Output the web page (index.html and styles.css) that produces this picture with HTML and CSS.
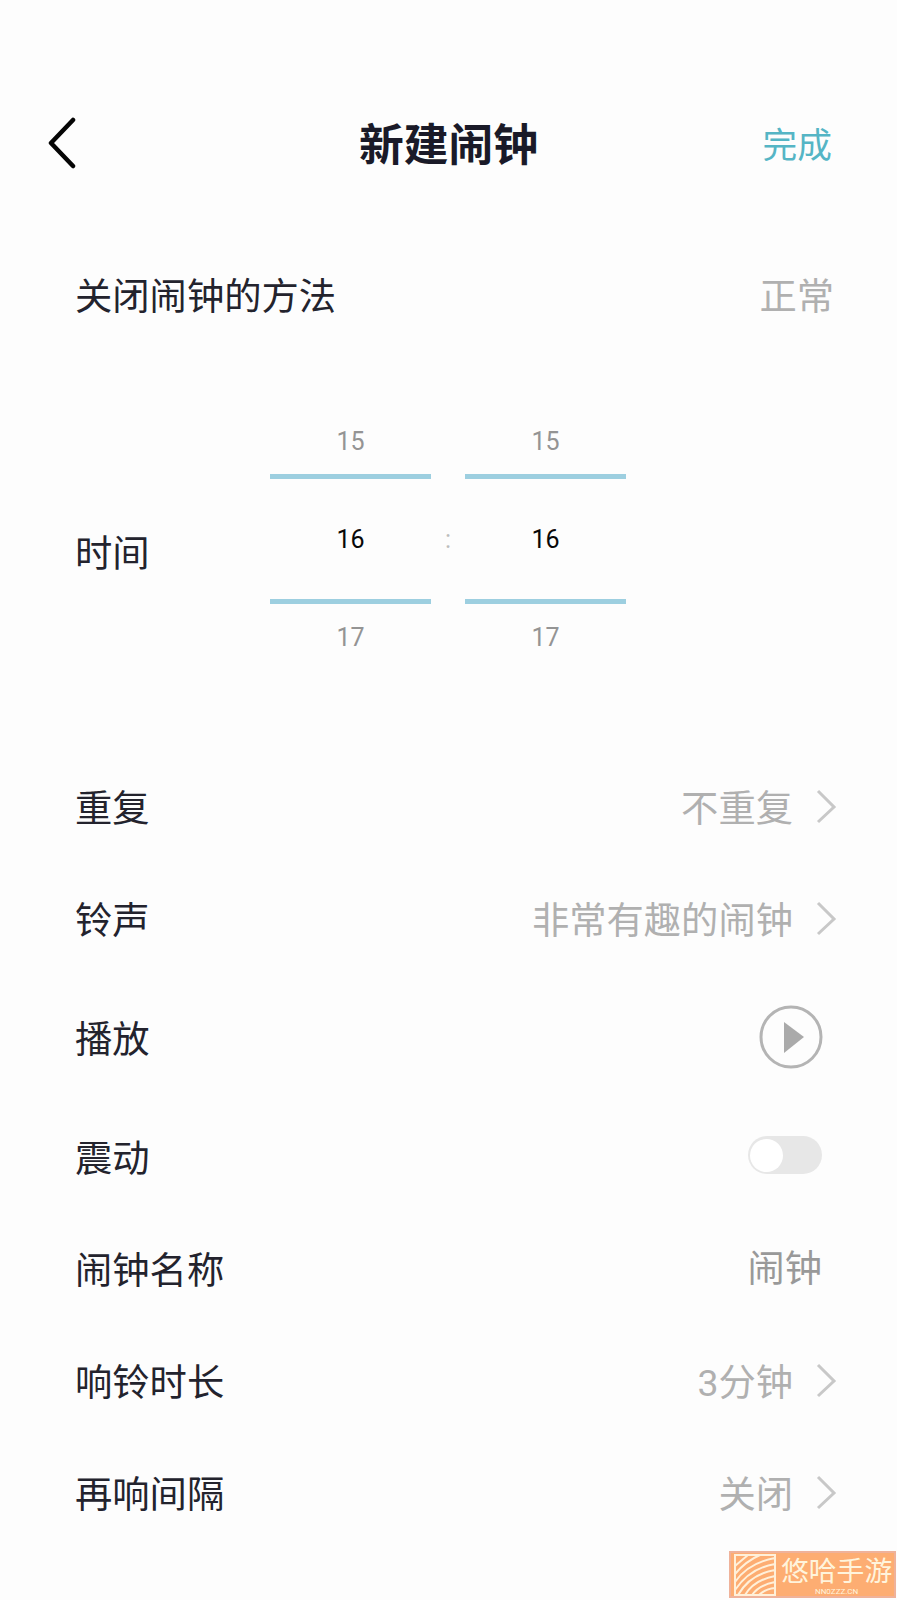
FILE: index.html
```html
<!DOCTYPE html>
<html lang="zh-CN">
<head>
<meta charset="utf-8">
<title>新建闹钟</title>
<link rel="stylesheet" href="styles.css">
</head>
<body>
<main class="screen">
  <header class="header">
    <svg class="back" viewBox="0 0 32 56"><path d="M25 7 3 30 25 53"/></svg>
    <h1 class="title">新建闹钟</h1>
    <span class="done">完成</span>
  </header>
  <section class="row method"><span>关闭闹钟的方法</span><span class="value flush">正常</span></section>
  <section class="row time">
    <span class="label">时间</span>
    <div class="picker">
      <div class="wheel"><span class="prev">15</span><span class="current">16</span><span class="next">17</span></div>
      <span class="colon">:</span>
      <div class="wheel"><span class="prev">15</span><span class="current">16</span><span class="next">17</span></div>
    </div>
  </section>
  <section class="row repeat"><span>重复</span><span class="value">不重复<svg class="chevron" viewBox="0 0 22 36"><path d="M2 3 18 19 2 34"/></svg></span></section>
  <section class="row sound"><span>铃声</span><span class="value">非常有趣的闹钟<svg class="chevron" viewBox="0 0 22 36"><path d="M2 3 18 19 2 34"/></svg></span></section>
  <section class="row play"><span>播放</span><svg class="play-button" viewBox="0 0 64 68"><circle cx="33" cy="36" r="30"/><path d="M26 21 46 36 26 52Z"/></svg></section>
  <section class="row vibrate"><span>震动</span><span class="toggle"><span class="knob"></span></span></section>
  <section class="row name"><span>闹钟名称</span><span class="value input">闹钟</span></section>
  <section class="row duration"><span>响铃时长</span><span class="value">3分钟<svg class="chevron" viewBox="0 0 22 36"><path d="M2 3 18 19 2 34"/></svg></span></section>
  <section class="row snooze"><span>再响间隔</span><span class="value">关闭<svg class="chevron" viewBox="0 0 22 36"><path d="M2 3 18 19 2 34"/></svg></span></section>
  <aside class="watermark">
    <svg class="mark" viewBox="0 0 42 42"><path d="M1 1H41V41H1ZM1 12Q8 6 14 1M1 20Q12 7 26 1M1 28Q14 9 41 4M1 36Q16 14 41 10M4 41Q16 20 41 16M11 41Q20 26 41 22M18 41Q25 31 41 28M25 41Q31 35 41 34"/></svg>
    <div class="brand"><span class="brand-name">悠哈手游</span><span class="brand-url">NN0ZZZ.CN</span></div>
  </aside>
</main>
</body>
</html>
```
FILE: styles.css
```css
* { box-sizing: border-box; }
body { margin: 0; background: #fdfdfd; }
.screen {
  position: relative;
  width: 897px;
  height: 1600px;
  padding-top: 91px;
  overflow: hidden;
  color: #23232d;
  font-family: Roboto, "Noto Sans CJK SC", sans-serif;
  font-size: 37.3px;
}
.header {
  display: grid;
  grid-template-columns: 200px 1fr 200px;
  align-items: center;
  height: 100px;
  margin-bottom: 47px;
  padding: 0 65px 0 48px;
}
.back { width: 32px; height: 56px; fill: none; stroke: #050505; stroke-width: 4.5; stroke-linecap: round; stroke-linejoin: round; }
.title { margin: 0; padding: 11px 0 0 17px; font-size: 44.8px; font-weight: 700; line-height: 1.4; text-align: center; color: #1a1a28; }
.done { padding-top: 4px; font-size: 34.7px; text-align: right; color: #55b5c5; }
.row {
  display: flex;
  align-items: center;
  justify-content: space-between;
  height: 112px;
  padding: 0 75px 0 75px;
  white-space: nowrap;
}
.value { display: flex; align-items: center; color: #b0b0b0; }
.flush { margin-right: -12px; }
.input { color: #999; margin-bottom: 4px; }
.chevron { width: 22px; height: 36px; margin: 0 -16px 0 23px; fill: none; stroke: #c8c8c8; stroke-width: 3; }
.time { height: 401px; justify-content: flex-start; }
.label { width: 195px; }
.picker { display: flex; margin-top: -24px; font-family: Roboto, sans-serif; font-size: 25px; }
.wheel { display: grid; grid-template-rows: 82px 130px 82px; width: 161px; text-align: center; }
.wheel span { display: flex; align-items: center; justify-content: center; }
.wheel .prev { padding-top: 18px; color: #949494; }
.wheel .current { padding-top: 1px; border: solid #9dcfe0; border-width: 5px 0; color: #080808; }
.wheel .next { padding-bottom: 14px; color: #949494; }
.colon { display: flex; align-items: center; justify-content: center; width: 34px; padding-top: 2px; color: #bdbdbd; }
.repeat { height: 110px; }
.sound { height: 114px; }
.play { height: 124px; }
.play-button { width: 64px; height: 68px; margin-bottom: 4px; overflow: visible; }
.play-button circle { fill: none; stroke: #b4b4b4; stroke-width: 3; }
.play-button path { fill: #aaa; }
.vibrate { height: 113px; }
.toggle { display: flex; align-items: center; width: 74px; height: 38px; margin-bottom: 1px; padding: 2px; border-radius: 19px; background: #e7e7e7; }
.knob { width: 33px; height: 33px; border-radius: 50%; background: #fff; }
.watermark {
  position: absolute;
  right: 1px;
  bottom: 2px;
  display: flex;
  align-items: center;
  width: 167px;
  height: 47px;
  padding-left: 3px;
  border: 2px solid #efb29a;
  background: #fdad72;
  color: #fff4dc;
}
.mark { flex: none; width: 42px; height: 42px; fill: none; stroke: #fff0d9; stroke-width: 2; }
.brand { display: flex; flex: none; flex-direction: column; align-items: center; margin-left: 5px; white-space: nowrap; }
.brand-name { font-family: "Noto Sans CJK SC", sans-serif; font-size: 27.8px; line-height: 30px; }
.brand-url { margin-top: 3px; font-size: 8px; line-height: 9px; }
```
